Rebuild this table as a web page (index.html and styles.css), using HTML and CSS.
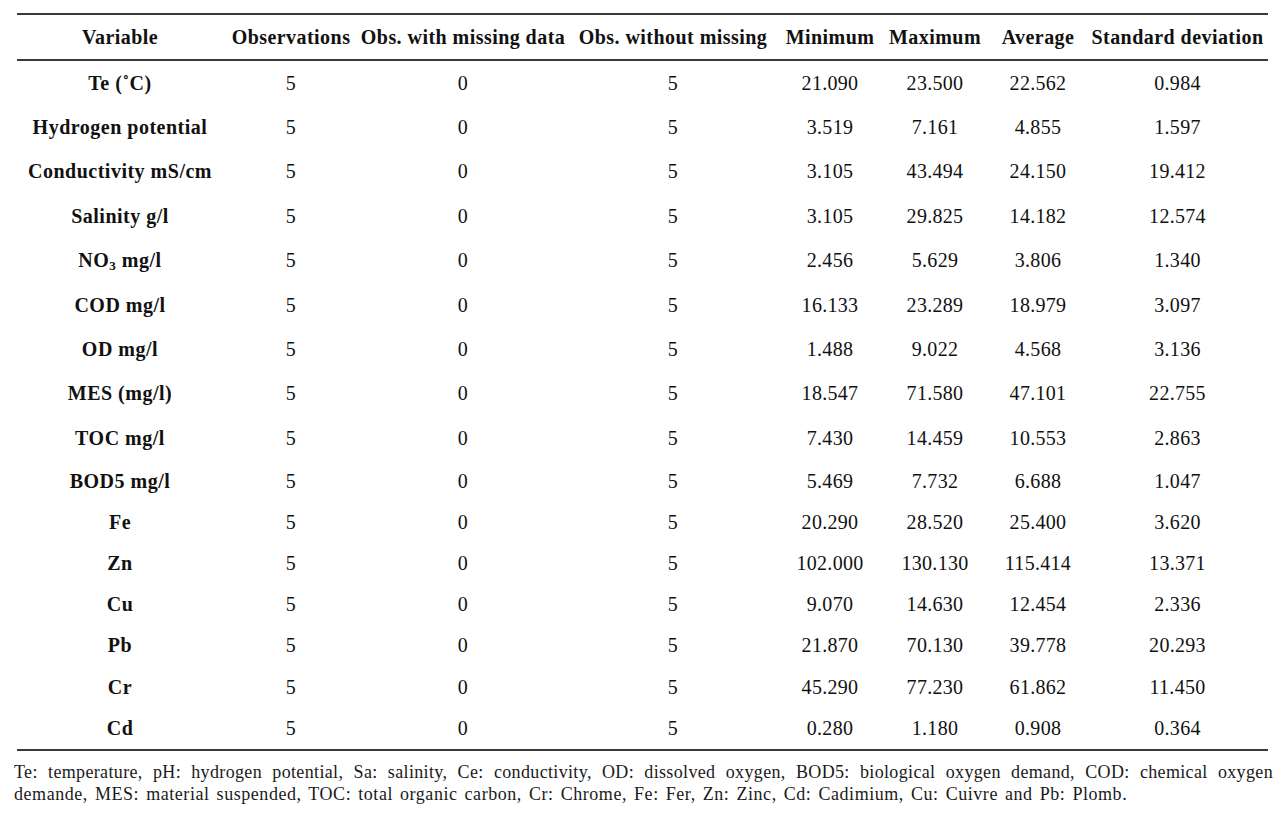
FILE: index.html
```html
<!DOCTYPE html>
<html>
<head>
<meta charset="utf-8">
<link rel="stylesheet" href="styles.css">
</head>
<body>
<div class="page">
<table class="stats">
  <colgroup>
    <col class="c1"><col class="c2"><col class="c3"><col class="c4"><col class="c5"><col class="c6"><col class="c7"><col class="c8">
  </colgroup>
  <thead>
    <tr>
      <th>Variable</th><th>Observations</th><th>Obs. with missing data</th><th>Obs. without missing</th><th>Minimum</th><th>Maximum</th><th>Average</th><th>Standard deviation</th>
    </tr>
  </thead>
  <tbody>
    <tr class="tall"><td class="var">Te (˚C)</td><td>5</td><td>0</td><td>5</td><td>21.090</td><td>23.500</td><td>22.562</td><td>0.984</td></tr>
    <tr class="tall"><td class="var">Hydrogen potential</td><td>5</td><td>0</td><td>5</td><td>3.519</td><td>7.161</td><td>4.855</td><td>1.597</td></tr>
    <tr class="tall"><td class="var">Conductivity mS/cm</td><td>5</td><td>0</td><td>5</td><td>3.105</td><td>43.494</td><td>24.150</td><td>19.412</td></tr>
    <tr class="tall"><td class="var">Salinity g/l</td><td>5</td><td>0</td><td>5</td><td>3.105</td><td>29.825</td><td>14.182</td><td>12.574</td></tr>
    <tr class="tall"><td class="var">NO<sub>3</sub> mg/l</td><td>5</td><td>0</td><td>5</td><td>2.456</td><td>5.629</td><td>3.806</td><td>1.340</td></tr>
    <tr class="tall"><td class="var">COD mg/l</td><td>5</td><td>0</td><td>5</td><td>16.133</td><td>23.289</td><td>18.979</td><td>3.097</td></tr>
    <tr class="tall"><td class="var">OD mg/l</td><td>5</td><td>0</td><td>5</td><td>1.488</td><td>9.022</td><td>4.568</td><td>3.136</td></tr>
    <tr class="tall"><td class="var">MES (mg/l)</td><td>5</td><td>0</td><td>5</td><td>18.547</td><td>71.580</td><td>47.101</td><td>22.755</td></tr>
    <tr class="tall"><td class="var">TOC mg/l</td><td>5</td><td>0</td><td>5</td><td>7.430</td><td>14.459</td><td>10.553</td><td>2.863</td></tr>
    <tr class="short"><td class="var">BOD5 mg/l</td><td>5</td><td>0</td><td>5</td><td>5.469</td><td>7.732</td><td>6.688</td><td>1.047</td></tr>
    <tr class="short"><td class="var">Fe</td><td>5</td><td>0</td><td>5</td><td>20.290</td><td>28.520</td><td>25.400</td><td>3.620</td></tr>
    <tr class="short"><td class="var">Zn</td><td>5</td><td>0</td><td>5</td><td>102.000</td><td>130.130</td><td>115.414</td><td>13.371</td></tr>
    <tr class="short"><td class="var">Cu</td><td>5</td><td>0</td><td>5</td><td>9.070</td><td>14.630</td><td>12.454</td><td>2.336</td></tr>
    <tr class="short"><td class="var">Pb</td><td>5</td><td>0</td><td>5</td><td>21.870</td><td>70.130</td><td>39.778</td><td>20.293</td></tr>
    <tr class="short"><td class="var">Cr</td><td>5</td><td>0</td><td>5</td><td>45.290</td><td>77.230</td><td>61.862</td><td>11.450</td></tr>
    <tr class="short"><td class="var">Cd</td><td>5</td><td>0</td><td>5</td><td>0.280</td><td>1.180</td><td>0.908</td><td>0.364</td></tr>
  </tbody>
</table>
<div class="note">
  <span class="note-line first">Te: temperature, pH: hydrogen potential, Sa: salinity, Ce: conductivity, OD: dissolved oxygen, BOD5: biological oxygen demand, COD: chemical oxygen</span>
  <span class="note-line second">demande, MES: material suspended, TOC: total organic carbon, Cr: Chrome, Fe: Fer, Zn: Zinc, Cd: Cadimium, Cu: Cuivre and Pb: Plomb.</span>
</div>
</div>
</body>
</html>
```

FILE: styles.css
```css
html, body {
  margin: 0;
  padding: 0;
  background: #ffffff;
}

body {
  font-family: "Liberation Serif", "Times New Roman", serif;
  color: #111111;
}

.page {
  padding: 13px 0 0 0;
}

.stats {
  margin-left: 17px;
  width: 1251px;
  border-collapse: collapse;
  table-layout: fixed;
  border-top: 2px solid #3a3a3a;
  border-bottom: 2px solid #3a3a3a;
}

.c1 { width: 206px; }
.c2 { width: 136px; }
.c3 { width: 208px; }
.c4 { width: 212px; }
.c5 { width: 102px; }
.c6 { width: 108px; }
.c7 { width: 98px; }
.c8 { width: 181px; }

.stats th {
  font-size: 20px;
  font-weight: bold;
  letter-spacing: 0.45px;
  height: 44px;
  padding: 0;
  text-align: center;
  vertical-align: middle;
  white-space: nowrap;
  border-bottom: 2px solid #3a3a3a;
}

.stats td {
  font-size: 20px;
  letter-spacing: 0.3px;
  padding: 0;
  text-align: center;
  vertical-align: middle;
  white-space: nowrap;
}

.stats td.var {
  font-weight: bold;
  letter-spacing: 0.5px;
}

.stats tr.tall td {
  height: 44.4px;
}

.stats tr.short td {
  height: 41.2px;
}

.stats sub {
  font-size: 13px;
  vertical-align: -3px;
  line-height: 0;
}

.note {
  margin: 10px 10px 0 14px;
  font-size: 18px;
  line-height: 22px;
  letter-spacing: 0.35px;
  color: #1a1a1a;
}

.note-line {
  display: block;
  white-space: nowrap;
}

.note-line.first {
  text-align: justify;
  text-align-last: justify;
  white-space: normal;
}

.note-line.second {
  letter-spacing: 0.55px;
  word-spacing: 2px;
}
```
